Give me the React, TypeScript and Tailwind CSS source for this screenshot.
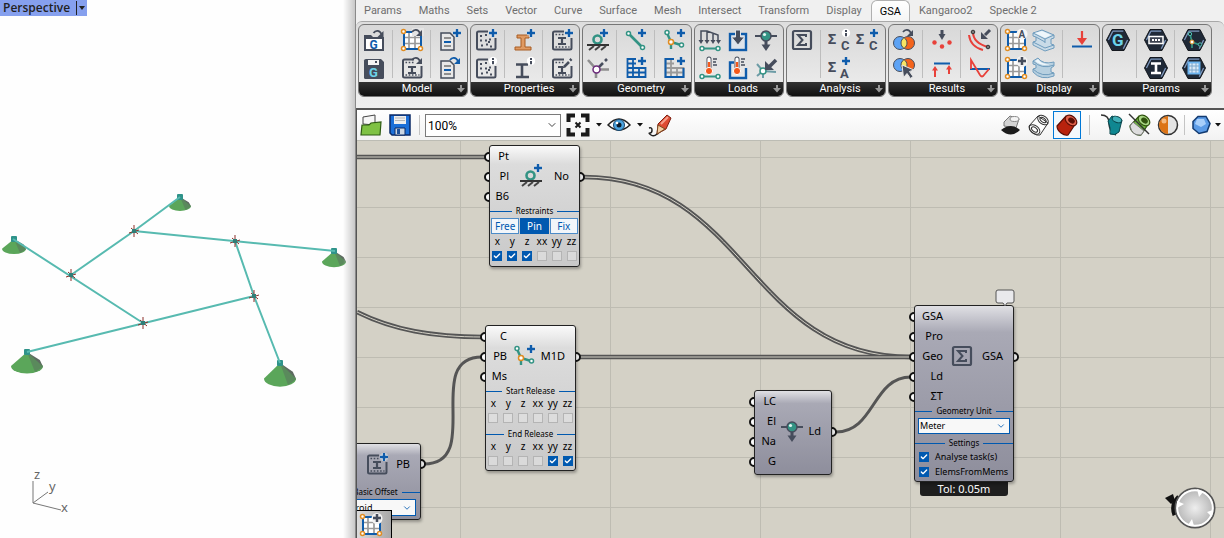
import { ReactNode } from 'react';
import { Check, ChevronDown } from 'lucide-react';

const DARK = '#464d5c';
const BLUE = '#0f5cab';
const TEAL = '#339384';
const ORANGE = '#e08d23';
const RED = '#e8413a';
const GRAY = '#8f8f8f';

/* ---------- icon parts ---------- */

function Icon({ children }: { children: ReactNode }) {
  return (
    <svg viewBox="0 0 24 24" className="h-6 w-6" fill="none" aria-hidden="true">
      {children}
    </svg>
  );
}

function Plus({ x = 18, y = 5, color = BLUE }: { x?: number; y?: number; color?: string }) {
  return (
    <>
      <path d={`M${x - 4} ${y}h8M${x} ${y - 4}v8`} stroke="#e6e6e6" strokeWidth="4.5" />
      <path d={`M${x - 4} ${y}h8M${x} ${y - 4}v8`} stroke={color} strokeWidth="2.4" />
    </>
  );
}

function Info({ x = 18, y = 5 }: { x?: number; y?: number }) {
  return (
    <>
      <circle cx={x} cy={y} r="4.2" fill="#fff" />
      <path d={`M${x} ${y - 3}v2M${x} ${y}v3.2`} stroke={DARK} strokeWidth="2" />
    </>
  );
}

function Swoosh({ color = DARK, x = 12, y = 2 }: { color?: string; x?: number; y?: number }) {
  return (
    <g transform={`translate(${x} ${y})`}>
      <path d="M0 3C2 0 6 0 8 4" stroke={color} strokeWidth="1.8" />
      <path d="M10 1v6H4z" fill={color} />
    </g>
  );
}

function IBeam({ x, y, s, color = DARK }: { x: number; y: number; s: number; color?: string }) {
  return (
    <path
      d={`M${x - s} ${y - s + 1}h${2 * s}M${x} ${y - s}v${2 * s}M${x - s} ${y + s - 1}h${2 * s}`}
      stroke={color}
      strokeWidth="2.2"
    />
  );
}

function Ring({ x, y, color = ORANGE, r = 2 }: { x: number; y: number; color?: string; r?: number }) {
  return <circle cx={x} cy={y} r={r} fill="#fff" stroke={color} strokeWidth="1.5" />;
}

function Thermometer() {
  return (
    <>
      <path d="M11 3v12" stroke={DARK} strokeWidth="5" strokeLinecap="round" />
      <path d="M11 3v12" stroke="#fff" strokeWidth="3.200" strokeLinecap="round" />
      <path d="M11 6v9" stroke="#f4581b" strokeWidth="2.400" />
      <circle cx="11" cy="15" r="3.600" fill="#f4581b" stroke="#fff" />
      <path d="M15 3h4M15 6h3M15 9h4" stroke={DARK} strokeWidth="1.400" />
    </>
  );
}

function GridPlate() {
  return (
    <>
      <path d="M4 4h17v17H4z" fill="#fff" stroke={BLUE} strokeWidth="2" />
      <path d="M9 5v15M15 5v15M5 9.500h15M5 15.500h15" stroke="#9a9a9a" strokeWidth="1.7" />
      <Ring x={3.500} y={3.500} />
      <Ring x={3.500} y={20.500} />
      <Ring x={20.500} y={20.500} />
    </>
  );
}

function SectionFrame({ children }: { children?: ReactNode }) {
  return (
    <>
      <path d="M14 3.500H4.500Q3 3.500 3 5V20Q3 21.500 4.500 21.500H20Q21.500 21.500 21.500 20V10" stroke={DARK} strokeWidth="2" />
      {children}
    </>
  );
}

const Speckles = () => (
  <path d="M6 8h2m3-1h2M6 12.500h2m3 0h2m2-1h2M7 17.500h2m3-1h2m2 2h2M14 14h2" stroke={DARK} strokeWidth="1.8" />
);

const FrameDots = () => (
  <path d="M5.500 6.500h8M5.500 19h14" stroke={DARK} strokeWidth="1.400" strokeDasharray="1.600 1.600" />
);

function Sigma({ x, y, size }: { x: number; y: number; size: number }) {
  return (
    <text x={x} y={y} fontSize={size} fontWeight="700" fontFamily="Noto Sans, sans-serif" fill={DARK}>
      Σ
    </text>
  );
}

function Glyph({ x, y, size, fill = DARK, children }: { x: number; y: number; size: number; fill?: string; children: string }) {
  return (
    <text x={x} y={y} fontSize={size} fontWeight="700" fontFamily="Roboto, sans-serif" fill={fill}>
      {children}
    </text>
  );
}

function Hexagon({ children }: { children: ReactNode }) {
  return (
    <Icon>
      <path d="M6 1.500h12L23.500 12 18 22.500H6L.5 12z" fill="#1f2937" stroke="#15191f" />
      <path d="M6.700 3.200h10.600M2.400 12l4.300-8.500M21.600 12l-4.300 8.700" stroke="#7d97bd" strokeWidth="1.3" />
      {children}
    </Icon>
  );
}

function Venn() {
  return (
    <>
      <circle cx="8" cy="14" r="6.500" fill="#5da3f5" stroke={DARK} />
      <circle cx="16" cy="14" r="6.500" fill="#f4641c" stroke={DARK} />
      <path d="M12 8.500c4 3 4 8 0 11-4-3-4-8 0-11z" fill="#f7e463" stroke={DARK} />
    </>
  );
}

const MemberFork = ({ stroke = TEAL }: { stroke?: string }) => (
  <>
    <path d="M5 5l4 9 10 3M9 14v7" stroke={stroke} strokeWidth="2.4" />
    <Ring x={5} y={4.500} color={stroke} />
    <Ring x={19.500} y={17} color={stroke} />
    <Ring x={9} y={14} r={2.500} />
  </>
);

const SupportShape = () => (
  <>
    <circle cx="11.500" cy="11.500" r="4" stroke={TEAL} strokeWidth="2.600" />
    <path d="M1 17h22" stroke="#333" strokeWidth="2" />
    <path d="M8 18l-5 4M14 18l-5 4M20 18l-5 4" stroke="#444" strokeWidth="2" />
  </>
);

const LoadShape = () => (
  <>
    <path d="M1 8h22" stroke={DARK} strokeWidth="2" />
    <path d="M12 12v6" stroke={DARK} strokeWidth="3" />
    <path d="M7.500 16.500h9L12 23z" fill={DARK} />
    <circle cx="12" cy="8" r="5" fill={TEAL} stroke={DARK} strokeWidth="1.500" />
    <circle cx="10.500" cy="6.500" r="1.600" fill="#dff5f0" />
  </>
);

const MeshShape = ({ color }: { color: string }) => (
  <path d="M12 3H3.500v18h18v-9H3.500M3.500 7.500H12M9 3v18M15 12v9M3.500 16.500h18" stroke={color} strokeWidth="1.800" />
);

const ElementLine = () => (
  <>
    <path d="M4 20.500h16" stroke={TEAL} strokeWidth="2" />
    <Ring x={4} y={20.500} color={TEAL} />
    <Ring x={20} y={20.500} color={TEAL} />
  </>
);

const SigmaBox = () => (
  <>
    <rect x="3" y="3" width="18" height="18" rx="1.500" stroke={DARK} strokeWidth="2.200" />
    <path d="M16 9V7H8l4.500 5L8 17h8v-2" stroke={DARK} strokeWidth="2" />
  </>
);

const BeamPlus = () => (
  <Icon>
    <SectionFrame>
      <FrameDots />
      <IBeam x={12} y={13} s={4} />
    </SectionFrame>
    <Plus x={19} />
  </Icon>
);

const GridPlus = () => (
  <Icon>
    <GridPlate />
    <circle cx="18" cy="5.500" r="5.500" fill="#f5f5f5" />
    <Plus x={18} y={5} color={DARK} />
  </Icon>
);

/* ---------- ribbon ---------- */

interface Tool {
  label: string;
  icon: ReactNode;
}

interface Group {
  name: string;
  // sections are split by a thin vertical rule, each one holds columns of tools
  sections: Tool[][][];
}

const sheet = (
  <>
    <path d="M3 5h9l4 4v13H3z" fill="#e8e8e8" stroke={DARK} strokeWidth="1.500" />
    <path d="M6 10h7" stroke={GRAY} strokeWidth="1.800" />
    <path d="M6 14h7" stroke={BLUE} strokeWidth="1.800" />
    <path d="M6 18h7" stroke={GRAY} strokeWidth="1.800" />
  </>
);

const groups: Group[] = [
  {
    name: 'Model',
    sections: [
      [[
        {
          label: 'Open model',
          icon: (
            <Icon>
              <path d="M2 23V7h7l2 2h11v14H2z" fill={DARK} />
              <path d="M4 11h16v10H4z" fill="#fff" />
              <Glyph x={7.500} y={20.500} size={12} fill={BLUE}>G</Glyph>
              <Swoosh x={11.500} />
            </Icon>
          ),
        },
        {
          label: 'Save model',
          icon: (
            <Icon>
              <path d="M4 3h15l3 3v15.500Q22 23 20.500 23h-17Q2 23 2 21.500v-17Q2 3 4 3z" fill={DARK} />
              <path d="M6 4h11v5H6z" fill="#f4f4f4" />
              <path d="M13 5h2v2h-2z" fill={DARK} />
              <Glyph x={7} y={21} size={13} fill="#6cd3ea">G</Glyph>
            </Icon>
          ),
        },
      ]],
      [[
        { label: 'Create geometry', icon: <Icon><GridPlate /><path d="M12 0h12v8H12z" fill="#e4e4e4" /><Swoosh x={12} y={1} /></Icon> },
        {
          label: 'Get properties',
          icon: <Icon><SectionFrame><FrameDots /><IBeam x={12} y={14} s={4} /></SectionFrame><Swoosh x={12} y={1} /></Icon>,
        },
      ]],
      [[
        { label: 'New list', icon: <Icon>{sheet}<Plus x={19} y={5} /></Icon> },
        { label: 'Get list', icon: <Icon>{sheet}<Swoosh color={BLUE} x={12} y={1} /></Icon> },
      ]],
    ],
  },
  {
    name: 'Properties',
    sections: [
      [[
        { label: 'Create material', icon: <Icon><SectionFrame><Speckles /></SectionFrame><Plus x={19} /></Icon> },
        { label: 'Material info', icon: <Icon><SectionFrame><Speckles /></SectionFrame><Info x={19} /></Icon> },
      ]],
      [[
        {
          label: 'Create section',
          icon: (
            <Icon>
              <path d="M5 7h12v3h-4v9h6v3H3v-3h6v-9H5z" fill="#e09a62" stroke="#a85c22" />
              <Plus x={19} />
            </Icon>
          ),
        },
        { label: 'Section info', icon: <Icon><path d="M4 8.500h12M10 8v13M4 21h13" stroke={DARK} strokeWidth="2.600" /><Info x={19} /></Icon> },
      ]],
      [[
        { label: 'Create property', icon: <BeamPlus /> },
        {
          label: 'Edit property',
          icon: (
            <Icon>
              <SectionFrame><FrameDots /><IBeam x={12} y={14} s={4} /></SectionFrame>
              <path d="M14 11l7-7" stroke="#e6e6e6" strokeWidth="5" />
              <path d="M14 11l5-5M20 4.500l1.500-1.500" stroke={DARK} strokeWidth="2.600" />
            </Icon>
          ),
        },
      ]],
    ],
  },
  {
    name: 'Geometry',
    sections: [
      [[
        { label: 'Create support', icon: <Icon><SupportShape /><Plus /></Icon> },
        {
          label: 'Edit node',
          icon: (
            <Icon>
              <path d="M2 4l8 9v9M11 13.500h12" stroke={GRAY} strokeWidth="2.600" />
              <path d="M13 11l4-4M19 5l2-2" stroke={DARK} strokeWidth="2.600" />
              <Ring x={10.500} y={13.500} color="#6b2a7a" r={3.500} />
            </Icon>
          ),
        },
      ]],
      [[
        {
          label: 'Create 1D element',
          icon: (
            <Icon>
              <path d="M5 6l13 13" stroke={TEAL} strokeWidth="2.600" />
              <Ring x={4.500} y={5.500} color={TEAL} />
              <Ring x={18.500} y={19.500} color={TEAL} />
              <Plus />
            </Icon>
          ),
        },
        { label: 'Create 2D element', icon: <Icon><MeshShape color={BLUE} /><Plus x={18} /></Icon> },
      ]],
      [[
        { label: 'Create 1D member', icon: <Icon><MemberFork /><Plus x={19} /></Icon> },
        {
          label: 'Create 2D member',
          icon: (
            <Icon>
              <MeshShape color="#9a9a9a" />
              <path d="M12 3H3.500v18h18v-9" stroke={BLUE} strokeWidth="2" />
              <Plus x={19} />
            </Icon>
          ),
        },
      ]],
    ],
  },
  {
    name: 'Loads',
    sections: [
      [
        [
          {
            label: 'Beam load',
            icon: (
              <Icon>
                <path d="M3 13V3h6l11 4v6M9 3v10M15 5v8" stroke={DARK} strokeWidth="1.500" />
                <path d="M.5 12h5L3 16zM6.500 12h5L9 16zM12.500 12h5L15 16zM18 12h5l-2.500 4z" fill={DARK} />
                <ElementLine />
              </Icon>
            ),
          },
          { label: 'Thermal beam load', icon: <Icon><Thermometer /><ElementLine /></Icon> },
        ],
        [
          {
            label: 'Face load',
            icon: (
              <Icon>
                <rect x="4" y="6" width="16" height="16" fill="#dde3ea" stroke={BLUE} strokeWidth="2.400" />
                <path d="M9.500 2h5v7h4L12 17l-6.500-8h4z" fill={DARK} stroke="#dde3ea" />
              </Icon>
            ),
          },
          {
            label: 'Thermal face load',
            icon: (
              <Icon>
                <path d="M8 6.500H4v15.500h16V12" stroke={BLUE} strokeWidth="2.400" />
                <Thermometer />
              </Icon>
            ),
          },
        ],
        [
          { label: 'Node load', icon: <Icon><LoadShape /></Icon> },
          {
            label: 'Grid load',
            icon: (
              <Icon>
                <path d="M3 8l6 7v7M3 20l6-5 13 1" stroke="#6d9ca6" strokeWidth="2" />
                <Ring x={9} y={15} color={TEAL} r={3} />
                <path d="M22 4l-7 7" stroke={DARK} strokeWidth="3.600" />
                <path d="M11 5v9h9z" fill={DARK} />
              </Icon>
            ),
          },
        ],
      ],
    ],
  },
  {
    name: 'Analysis',
    sections: [
      [[{ label: 'Analyse', icon: <Icon><SigmaBox /></Icon> }]],
      [
        [
          { label: 'Case info', icon: <Icon><Sigma x={0} y={16} size={14} /><Glyph x={13} y={22} size={13}>C</Glyph><Info x={18} y={5} /></Icon> },
          { label: 'Create task', icon: <Icon><Sigma x={0} y={16} size={14} /><Glyph x={12} y={22} size={13}>A</Glyph><Plus x={18} y={5} /></Icon> },
        ],
        [{ label: 'Create case', icon: <Icon><Sigma x={0} y={16} size={14} /><Glyph x={13} y={22} size={13}>C</Glyph><Plus x={18} y={5} /></Icon> }],
      ],
    ],
  },
  {
    name: 'Results',
    sections: [
      [[
        { label: 'Get result', icon: <Icon><g transform="translate(0 1)"><Venn /></g><Swoosh x={11} y={1} /></Icon> },
        {
          label: 'Select result',
          icon: (
            <Icon>
              <g transform="translate(0 -5)"><Venn /></g>
              <path d="M10 9l12 5-4.500 1.500 3.500 5-2.500 2-3.500-5-3.500 4z" fill={DARK} stroke="#e6e6e6" />
            </Icon>
          ),
        },
      ]],
      [[
        {
          label: 'Node displacements',
          icon: (
            <Icon>
              <path d="M12 2v5" stroke={DARK} strokeWidth="3" />
              <path d="M8.500 6h7L12 12z" fill={DARK} />
              <circle cx="4.500" cy="14.500" r="2.200" fill={RED} />
              <circle cx="12" cy="18.500" r="2.200" fill={RED} />
              <circle cx="19.500" cy="14.500" r="2.200" fill={RED} />
            </Icon>
          ),
        },
        {
          label: 'Reactions',
          icon: (
            <Icon>
              <path d="M4 7.500h16" stroke={BLUE} strokeWidth="2.200" />
              <path d="M5 21v-8M19 18v-6" stroke={RED} strokeWidth="2" />
              <path d="M2 14.500h6L5 10zM16 13.500h6L19 9z" fill={RED} />
            </Icon>
          ),
        },
      ]],
      [[
        {
          label: 'Beam displacements',
          icon: (
            <Icon>
              <path d="M5 4c0 7 4 12 15 15M1 7c1 8 6 13 14 15" stroke={RED} strokeWidth="2" />
              <circle cx="5" cy="4" r="1.800" fill="#777" stroke="#333" />
              <circle cx="20" cy="19" r="1.800" fill="#777" stroke="#333" />
              <path d="M22 2l-5 5" stroke={DARK} strokeWidth="3" />
              <path d="M13 4v7h7z" fill={DARK} />
            </Icon>
          ),
        },
        {
          label: 'Beam forces',
          icon: (
            <Icon>
              <path d="M2 13h20" stroke={BLUE} strokeWidth="2" />
              <path d="M3 13V4l9 15q2 3 4 0l5-6" stroke={RED} strokeWidth="1.800" />
            </Icon>
          ),
        },
      ]],
    ],
  },
  {
    name: 'Display',
    sections: [
      [
        [
          {
            label: 'Annotate',
            icon: <Icon><GridPlate /><circle cx="18" cy="6" r="5.500" fill="#f5f5f5" /><Glyph x={14.500} y={10} size={10}>A</Glyph></Icon>,
          },
          { label: 'Preview grid', icon: <GridPlus /> },
        ],
        [
          {
            label: 'Section preview',
            icon: (
              <Icon>
                <path d="M1 5l9-3 12 5v3l-3 1v5l3 1v3l-9 3-12-6v-3l3-1V9L1 8z" fill="#c9dbe8" stroke="#6f9cbd" />
                <path d="M1 5l12 6 9-4M13 11v4M1 14l12 6 9-3M4 9l9 5" stroke="#6f9cbd" />
                <path d="M3 5l7-2 9 4-6 3z" fill="#eef6fb" />
              </Icon>
            ),
          },
          {
            label: 'Deformed preview',
            icon: (
              <Icon>
                <path d="M1 5l5-3q5 7 16 4v4l-3 2v4l3 1v3q-13 5-21-4v-3l3-1V9L1 8z" fill="#b7d0e0" stroke="#6f9cbd" />
                <path d="M1 5q9 9 21 4M1 13q9 9 21 4" stroke="#6f9cbd" />
                <path d="M3 5l3-2q5 7 14 4-9 5-17-2z" fill="#eef6fb" />
              </Icon>
            ),
          },
        ],
      ],
      [[
        {
          label: 'Load diagram',
          icon: (
            <Icon>
              <path d="M12 3v8" stroke={RED} strokeWidth="2.200" />
              <path d="M7 10h10l-5 7z" fill={RED} />
              <path d="M2 18.500h20" stroke={BLUE} strokeWidth="2.200" />
            </Icon>
          ),
        },
      ]],
    ],
  },
  {
    name: 'Params',
    sections: [
      [[{ label: 'Model param', icon: <Hexagon><Glyph x={6} y={18} size={17} fill="#6cd3ea">G</Glyph></Hexagon> }]],
      [[
        {
          label: 'Material param',
          icon: (
            <Hexagon>
              <rect x="5" y="8.500" width="14" height="7" fill="#3b4250" stroke="#fff" strokeWidth="1.500" />
              <path d="M8 12h8" stroke="#fff" strokeWidth="2" strokeDasharray="2 1" />
            </Hexagon>
          ),
        },
        { label: 'Section param', icon: <Hexagon><path d="M7 7.500h10M12 7v10M7 17h10" stroke="#fff" strokeWidth="2.600" /></Hexagon> },
      ]],
      [[
        {
          label: 'Member param',
          icon: (
            <Hexagon>
              <path d="M8 6l2 8 8 3M10 14v6" stroke={TEAL} strokeWidth="1.700" />
              <circle cx="8" cy="6" r="1.700" fill="#1f2937" stroke="#4fc0b0" />
              <circle cx="18" cy="16.500" r="1.700" fill="#1f2937" stroke="#4fc0b0" />
              <circle cx="10" cy="14" r="2" fill="#fff" stroke={ORANGE} />
            </Hexagon>
          ),
        },
        {
          label: 'Mesh param',
          icon: (
            <Hexagon>
              <rect x="6.500" y="6.500" width="11" height="11" fill="#dbe9f7" stroke="#6cb4f0" strokeWidth="2" />
              <path d="M10 7v10M14 7v10M7 10h10M7 14h10" stroke="#7da7cc" />
            </Hexagon>
          ),
        },
      ]],
    ],
  },
];

const tabs = [
  'Params', 'Maths', 'Sets', 'Vector', 'Curve', 'Surface', 'Mesh', 'Intersect',
  'Transform', 'Display', 'GSA', 'Kangaroo2', 'Speckle 2',
];

function RibbonGroup({ group }: { group: Group }) {
  return (
    <section className="flex h-[73px] shrink-0 flex-col overflow-hidden rounded-md border border-[#777] bg-linear-to-b from-[#d8d8d8] to-[#eeeeee]">
      <div className="flex flex-1 pt-px pr-[3px] pl-px">
        {group.sections.map((section, i) => (
          <div key={i} className="flex">
            {i > 0 && <div className="my-1 mr-[5px] ml-1 w-px bg-[#bdbdbd]" />}
            {section.map((column, j) => (
              <div key={j} className="flex w-7 flex-col">
                {column.map((tool) => (
                  <button key={tool.label} aria-label={tool.label} className="flex h-7 w-7 items-center justify-center">
                    {tool.icon}
                  </button>
                ))}
              </div>
            ))}
          </div>
        ))}
      </div>
      <div className="relative bg-linear-to-b from-[#333] to-[#111] pl-2 text-center text-[11px] leading-[14px] text-white">
        {group.name}
        <svg viewBox="0 0 8 8" className="absolute top-[3px] right-[2px] h-2 w-2" aria-hidden="true">
          <path d="M3 0h2v3h3L4 7.500 0 3h3z" fill="#999" />
        </svg>
      </div>
    </section>
  );
}

function Ribbon() {
  return (
    <header className="flex flex-col bg-[#f0f0f0]">
      <nav className="flex h-[21px] gap-[17px] pl-2 text-[11px] leading-[22px] text-[#6e6e6e]">
        {tabs.map((tab) =>
          tab === 'GSA' ? (
            <button key={tab} className="-mx-2 -mb-px shrink-0 rounded-t-md border border-b-0 border-[#b0b0b0] bg-linear-to-b from-white to-[#f4f4f4] px-2 leading-[17px] text-black">
              {tab}
            </button>
          ) : (
            <button key={tab} className="shrink-0">{tab}</button>
          ),
        )}
      </nav>
      <div className="flex h-[87px] items-start gap-[2px] overflow-hidden rounded-t-md border-t border-[#a8a8a8] bg-linear-to-b from-[#dedede] to-[#f0f0f0] pt-[2px] pl-[2px]">
        {groups.map((group) => (
          <RibbonGroup key={group.name} group={group} />
        ))}
      </div>
    </header>
  );
}

/* ---------- canvas toolbar ---------- */

const Caret = () => (
  <svg viewBox="0 0 6 4" className="h-1 w-[6px]" aria-hidden="true">
    <path d="M0 0h6L3 3.500z" fill="#111" />
  </svg>
);

const Tube = ({ fill, light, line }: { fill: string; light: string; line: string }) => (
  <g stroke={line} strokeWidth="1.200">
    <path d="M2 13L11 3l10 7-8 12q-3 1-7-2t-4-7z" fill={fill} />
    <ellipse cx="16" cy="7.500" rx="6.500" ry="4.500" transform="rotate(38 16 7.500)" fill={light} />
    <ellipse cx="16.500" cy="7.500" rx="3" ry="2" transform="rotate(38 16.500 7.500)" fill={line} />
  </g>
);

function ToolButton({ label, active, children }: { label: string; active?: boolean; children: ReactNode }) {
  return (
    <button
      aria-label={label}
      className={
        active
          ? 'flex h-7 w-7 items-center justify-center border border-[#0078d7] bg-[#f3f8fc]'
          : 'flex h-7 w-7 items-center justify-center'
      }
    >
      {children}
    </button>
  );
}

function Toolbar() {
  return (
    <div className="flex h-[31px] items-center gap-px border-b border-[#bcbcb4] bg-linear-to-b from-white to-[#f2f2f2] pr-[3px]">
      <ToolButton label="Open file">
        <Icon>
          <path d="M4 11V4l12-2v10z" fill="#f7f7f7" stroke="#444" />
          <path d="M2 22l1-10h7l2-2 10-1-1 13z" fill="#7fc244" stroke="#2d5a12" strokeWidth="1.200" />
        </Icon>
      </ToolButton>
      <ToolButton label="Save file">
        <Icon>
          <path d="M2 2h20v20H4l-2-2z" fill="#1b6fd8" stroke="#0b2a66" strokeWidth="1.500" />
          <path d="M6 3h12v8H6z" fill="#eee" />
          <path d="M7 5h10M7 7.500h10" stroke="#b8b8b8" />
          <path d="M7 15h10v7H7z" fill="#ccd6e2" stroke="#0b2a66" />
          <path d="M9 16h3v5H9z" fill="#1b4f9a" />
        </Icon>
      </ToolButton>
      <div className="mx-1 h-5 w-px bg-[#c4c4c4]" />
      <div className="relative">
        <select aria-label="Zoom" className="h-[23px] w-[136px] appearance-none border border-[#7a7a7a] bg-white pl-[2px] text-xs text-black">
          <option>100%</option>
        </select>
        <ChevronDown className="pointer-events-none absolute top-[6px] right-[3px] h-3 w-3 text-[#444]" />
      </div>
      <div className="ml-[2px] flex items-center">
        <ToolButton label="Zoom extents">
          <Icon>
            <path d="M2.500 9V2.500H9M15 2.500h6.500V9M21.500 15v6.500H15M9 21.500H2.500V15" stroke="#1a1a1a" strokeWidth="4" />
            <path d="M9.500 9.500l5 5m0-5l-5 5" stroke="#1a1a1a" strokeWidth="2" />
          </Icon>
        </ToolButton>
        <button aria-label="Named views" className="flex w-[13px] justify-center"><Caret /></button>
        <ToolButton label="Preview">
          <Icon>
            <path d="M1 12Q12 0 23 12 12 22 1 12z" fill="#fff" stroke="#222" strokeWidth="1.500" />
            <circle cx="12" cy="12" r="5.500" fill="#4aa3df" stroke="#17466e" />
            <circle cx="12" cy="12" r="2.500" fill="#0b1c2c" />
            <circle cx="10" cy="10" r="1.300" fill="#fff" />
          </Icon>
        </ToolButton>
        <button aria-label="Preview options" className="flex w-[13px] justify-center"><Caret /></button>
        <ToolButton label="Sketch">
          <Icon>
            <path d="M1 15q3-1 3 2t-2 3 1 2 6-1q3-1 1-4" stroke="#222" strokeWidth="1.500" />
            <path d="M9 21l1-10L19 2l4 3-5 11z" fill="#de4b32" stroke="#7c1f10" />
            <path d="M9 21l1-9 7 4z" fill="#f4cfa5" stroke="#7a4a20" />
            <path d="M13 11l7-7" stroke="#f6a08c" strokeWidth="2" />
          </Icon>
        </ToolButton>
      </div>
      <div className="ml-auto flex items-center">
        <ToolButton label="No preview">
          <Icon>
            <path d="M5 9l6-6 9 3-3 9-12-2z" fill="#d4d4d4" stroke="#777" />
            <ellipse cx="15.500" cy="6" rx="4.500" ry="2.500" fill="#f4f4f4" stroke="#888" />
            <path d="M2 17q10-8 19 0-9 9-19 0z" fill="#1c1c1c" />
          </Icon>
        </ToolButton>
        <ToolButton label="Wireframe preview">
          <Icon>
            <path d="M2 13L11 3l10 7-8 12q-3 1-7-2t-4-7z" fill="#fff" stroke="#333" />
            <ellipse cx="16" cy="7" rx="6" ry="4" transform="rotate(38 16 7)" stroke="#333" />
            <ellipse cx="16" cy="7" rx="3.500" ry="2" transform="rotate(38 16 7)" stroke="#333" />
            <ellipse cx="7.500" cy="16.500" rx="6" ry="4" transform="rotate(38 7.500 16.500)" stroke="#333" />
            <ellipse cx="7.500" cy="16.500" rx="3.500" ry="2" transform="rotate(38 7.500 16.500)" stroke="#333" />
          </Icon>
        </ToolButton>
        <ToolButton label="Shaded preview" active>
          <Icon><Tube fill="#b8220d" light="#e0604a" line="#5a0d04" /></Icon>
        </ToolButton>
        <div className="mx-2 h-5 w-px bg-[#c4c4c4]" />
        <ToolButton label="Document preview">
          <Icon>
            <path d="M1 2q8 0 8 8t7 12" stroke="#333" strokeWidth="1.500" />
            <path d="M8 8l4-5 10 4-3 12q-4 4-9 2 1-6-2-13z" fill="#0f8791" stroke="#0a464c" />
            <ellipse cx="17" cy="6.500" rx="5" ry="3" transform="rotate(20 17 6.500)" fill="#41b0b8" stroke="#0a464c" />
          </Icon>
        </ToolButton>
        <ToolButton label="Selected preview">
          <Icon>
            <Tube fill="#6db83c" light="#a8d684" line="#30520f" />
            <path d="M2 13l3-4 11 9-3 4q-9 1-11-9z" fill="#ddd" stroke="#777" />
            <path d="M1 1l20 20" stroke="#333" strokeWidth="1.500" />
          </Icon>
        </ToolButton>
        <ToolButton label="Preview material">
          <Icon>
            <circle cx="12" cy="12" r="9.500" fill="#e4e4e4" stroke="#333" strokeWidth="1.500" />
            <path d="M12 3a9 9 0 000 18z" fill="#dc7416" />
            <circle cx="8" cy="8" r="2.500" fill="#f5ba80" />
          </Icon>
        </ToolButton>
        <div className="mx-[2px] h-5 w-px bg-[#c4c4c4]" />
        <ToolButton label="Mesh quality">
          <Icon>
            <path d="M9 3.500l8 0 4 7-3 8-8 2-6-5 0-7z" fill="#5b9be6" stroke="#123a70" strokeWidth="1.500" />
            <path d="M8 6l7 0 2 5-5 3-6-3z" fill="#a8cffa" />
          </Icon>
        </ToolButton>
        <button aria-label="Mesh quality options" className="flex w-[6px] justify-center"><Caret /></button>
      </div>
    </div>
  );
}

/* ---------- canvas nodes ---------- */

const axes = ['x', 'y', 'z', 'xx', 'yy', 'zz'];

function Tick({ label, checked }: { label: string; checked?: boolean }) {
  return (
    <span className="relative flex h-[10px] w-[10px] shrink-0">
      <input
        type="checkbox"
        aria-label={label}
        defaultChecked={checked}
        className="peer h-[10px] w-[10px] appearance-none border border-[#b4b4b4] bg-[#e4e4e4]/60 checked:border-[#0059b0] checked:bg-[#0059b0]"
      />
      <Check strokeWidth={4} className="pointer-events-none absolute top-px left-px hidden h-2 w-2 text-white peer-checked:block" />
    </span>
  );
}

function Divider({ children }: { children: string }) {
  return (
    <div className="flex items-center gap-1 text-[8px] leading-[10px] whitespace-nowrap">
      <span className="h-px flex-1 bg-[#0059b0]" />
      {children}
      <span className="h-px flex-1 bg-[#0059b0]" />
    </div>
  );
}

function AxisTicks({ name, on }: { name: string; on: string[] }) {
  return (
    <div className="grid grid-cols-6 justify-items-center pt-px text-[10px] leading-[12px]">
      {axes.map((axis) => (
        <div key={axis} className="flex flex-col items-center gap-1">
          <span>{axis}</span>
          <Tick label={`${name} ${axis}`} checked={on.includes(axis)} />
        </div>
      ))}
    </div>
  );
}

interface NodeProps {
  place: string;
  inputWidth: string;
  tone: 'light' | 'dark';
  inputs: string[];
  output: string;
  icon: ReactNode;
  children?: ReactNode;
}

function CanvasNode({ place, inputWidth, tone, inputs, output, icon, children }: NodeProps) {
  const tones = {
    light: 'from-[#fafafa] via-[#dcdcdc] to-[#c9c9c9]',
    dark: 'from-[#e0e0e4] via-[#a9a9b5] to-[#8e8e9c]',
  };

  return (
    <div className={`absolute rounded-[3px] border border-[#222] bg-linear-to-b via-15% text-[11px] leading-5 text-black shadow-[1px_2px_3px_rgba(0,0,0,0.3)] ${tones[tone]} ${place}`}>
      <div className="flex items-center">
        <div className={`text-right ${inputWidth}`}>
          {inputs.map((name, i) => (
            <div key={i} className="h-5">{name}</div>
          ))}
        </div>
        <div className="flex flex-1 justify-center">{icon}</div>
        <div className="pr-[10px]">{output}</div>
      </div>
      {children}
    </div>
  );
}

const ports: [number, number][] = [
  [132, 16], [132, 36], [132, 56], [223, 36],
  [128, 196], [128, 216], [128, 236], [219, 216],
  [64, 323],
  [397, 261], [397, 281], [397, 301], [397, 321], [475, 291],
  [557, 176], [557, 196], [557, 216], [557, 236], [557, 256], [657, 216],
];

const listWires = [
  'M0 16H129',
  'M0 171C36 189 76 196 126 196',
  'M226 36C390 36 390 216 554 216',
  'M222 216H554',
];

const itemWires = ['M67 323C127 323 65 216 125 216', 'M479 291C518 291 515 236 554 236'];

function Wires() {
  return (
    <svg className="absolute inset-0 h-full w-full" fill="none" aria-hidden="true">
      {listWires.map((d) => (
        <g key={d}>
          <path d={d} stroke="#555" strokeWidth="4.500" />
          <path d={d} stroke="#d4d1c6" strokeWidth="1" />
        </g>
      ))}
      {itemWires.map((d) => (
        <path key={d} d={d} stroke="#555" strokeWidth="3" />
      ))}
      {ports.map(([x, y]) => (
        <circle key={`${x}-${y}`} cx={x} cy={y} r="4" fill="#fff" stroke="#111" strokeWidth="2" />
      ))}
    </svg>
  );
}

function Compass() {
  return (
    <svg viewBox="0 0 52 44" className="absolute right-2 bottom-2 h-11 w-[52px]" aria-hidden="true">
      <defs>
        <radialGradient id="dial">
          <stop offset="0" stopColor="#eee" />
          <stop offset="1" stopColor="#b4b4b4" />
        </radialGradient>
      </defs>
      <path d="M15 11q-8 8-4 18" fill="none" stroke="#111" strokeWidth="5" />
      <path d="M1 12l8-4 2 7-4 3z" fill="#111" />
      <circle cx="31" cy="22" r="19.500" fill="url(#dial)" stroke="#555" strokeWidth="2" />
      <circle cx="31" cy="22" r="17.800" fill="none" stroke="#fff" strokeWidth="2" />
      <path d="M33 3l6 3-4 5zM13 15l7 3-7 4zM49 24l-6 2 5 5zM24 39l4-6 2 7z" fill="#fff" />
    </svg>
  );
}

function Canvas() {
  return (
    <main className="relative flex-1 overflow-hidden bg-[#d4d1c6] bg-[linear-gradient(to_right,#bebcb2_1px,transparent_1px),linear-gradient(to_bottom,#bebcb2_1px,transparent_1px)] bg-[size:150px_50px] bg-[position:103px_16px] font-['Noto_Sans',sans-serif]">
      <Wires />

      <CanvasNode place="left-[132px] top-1 w-[91px] h-[122px]" inputWidth="w-[19px]" tone="light" inputs={['Pt', 'Pl', 'B6']} output="No" icon={<Icon><SupportShape /><Plus x={19} y={4} /></Icon>}>
        <Divider>Restraints</Divider>
        <div className="mt-[2px] grid grid-cols-3 gap-px px-px text-center text-[10px] leading-[14px] text-[#0059b0]">
          <button className="border border-[#4d8cc8] bg-[#f2f6fa]">Free</button>
          <button className="border border-[#0059b0] bg-[#0059b0] text-white">Pin</button>
          <button className="border border-[#4d8cc8] bg-[#f2f6fa]">Fix</button>
        </div>
        <AxisTicks name="Restraint" on={['x', 'y', 'z']} />
      </CanvasNode>

      <CanvasNode place="left-[128px] top-[184px] w-[91px] h-[146px]" inputWidth="w-[21px]" tone="light" inputs={['C', 'PB', 'Ms']} output="M1D" icon={<Icon><MemberFork /><Plus x={19} y={5} /></Icon>}>
        <Divider>Start Release</Divider>
        <AxisTicks name="Start release" on={[]} />
        <div className="pt-[6px]">
          <Divider>End Release</Divider>
        </div>
        <AxisTicks name="End release" on={['yy', 'zz']} />
      </CanvasNode>

      <CanvasNode place="-left-[27px] top-[302px] w-[91px] h-[77px]" inputWidth="w-[27px]" tone="dark" inputs={['', '']} output="PB" icon={<BeamPlus />}>
        <div className="pt-[3px]">
          <Divider>Basic Offset</Divider>
        </div>
        <div className="relative mx-1 mt-[2px]">
          <select aria-label="Basic offset" className="block h-[17px] w-full appearance-none border border-[#0059b0] bg-[#f8f8f8] text-[9px] leading-[14px]">
            <option>Centroid</option>
          </select>
          <ChevronDown className="pointer-events-none absolute top-1 right-1 h-[10px] w-[10px] text-[#0059b0]" />
        </div>
      </CanvasNode>

      <CanvasNode place="left-[397px] top-[249px] w-[78px] h-[85px]" inputWidth="w-[21px]" tone="dark" inputs={['LC', 'El', 'Na', 'G']} output="Ld" icon={<Icon><LoadShape /></Icon>} />

      <div className="absolute top-[340px] left-[563px] w-[88px] rounded-b-[3px] bg-[#1e1e1e] text-center text-[11px] leading-[15px] text-white">
        Tol: 0.05m
      </div>
      <CanvasNode place="left-[557px] top-[164px] w-[100px] h-[177px]" inputWidth="w-[28px]" tone="dark" inputs={['GSA', 'Pro', 'Geo', 'Ld', 'ΣT']} output="GSA" icon={<Icon><SigmaBox /></Icon>}>
        <Divider>Geometry Unit</Divider>
        <div className="relative mx-[3px] mt-[2px]">
          <select aria-label="Geometry unit" className="block h-4 w-full appearance-none border border-[#0059b0] bg-[#f8f8f8] pl-px text-[9px] leading-[14px]">
            <option>Meter</option>
          </select>
          <ChevronDown className="pointer-events-none absolute top-[3px] right-1 h-[10px] w-[10px] text-[#0059b0]" />
        </div>
        <div className="pt-1">
          <Divider>Settings</Divider>
        </div>
        <div className="flex flex-col pt-px pl-1 text-[9px] leading-[15px]">
          <div className="flex items-center gap-[6px]"><Tick label="Analyse task(s)" checked />Analyse task(s)</div>
          <div className="flex items-center gap-[6px]"><Tick label="ElemsFromMems" checked />ElemsFromMems</div>
        </div>
      </CanvasNode>
      <svg viewBox="0 0 20 18" className="absolute top-[148px] left-[638px] h-[18px] w-5" aria-hidden="true">
        <path d="M3 1h14q2 0 2 2v9q0 2-2 2h-5l-2 3-2-3H3q-2 0-2-2V3q0-2 2-2z" fill="#e9e9ec" stroke="#555" />
      </svg>

      <button aria-label="Grid preview" className="absolute bottom-0 left-0 flex h-7 w-[35px] items-center border border-b-0 border-l-0 border-black bg-linear-to-r from-[#dcdcdc] to-[#a8a8a8] pl-[2px]">
        <GridPlus />
      </button>
      <Compass />
    </main>
  );
}

/* ---------- 3D viewport ---------- */

// apex x, apex y, half width, height
const cones: [number, number, number, number][] = [
  [180, 197, 11, 13],
  [14, 239, 12, 14],
  [334, 251, 12, 15],
  [27, 352, 16, 20],
  [280, 363, 16, 22],
];

const joints: [number, number][] = [[134, 231], [235, 241], [71, 275], [143, 323], [254, 296]];

function Viewport() {
  return (
    <aside className="relative w-[355px] shrink-0 bg-[#fefefe]">
      <button className="absolute top-0 left-0 flex h-4 items-center bg-[#86a0ee] pl-[3px] font-['Open_Sans',sans-serif] text-[12px] font-semibold text-[#222]">
        Perspective
        <span className="ml-[6px] flex h-[14px] items-center border-l border-[#222] px-[2px]">
          <svg viewBox="0 0 6 4" className="h-1 w-[6px]" aria-hidden="true"><path d="M0 0h6L3 4z" fill="#222" /></svg>
        </span>
      </button>
      <svg className="h-full w-full" fill="none" aria-label="Structure model">
        {cones.map(([x, y, w, h]) => (
          <g key={x}>
            <path d={`M${x} ${y}L${x - w} ${y + h * 0.7}A${w} ${h * 0.38} 0 0 0 ${x + w} ${y + h * 0.7}z`} fill="#5ba65a" />
            <path d={`M${x} ${y}L${x + w * 0.5} ${y + h}L${x + w} ${y + h * 0.75}L${x + w * 0.8} ${y + h * 0.5}z`} fill="#5a8a5c" />
            <path d={`M${x} ${y}L${x + w} ${y + h * 0.72}L${x + w * 0.8} ${y + h * 0.4}z`} fill="#5d6a60" />
            <rect x={x - 3} y={y - 3} width="6" height="6" rx="1" fill="#2f938a" />
          </g>
        ))}
        <path
          d="M180 197L134 231L71 275M134 231L335 251M235 241L254 296L280 363M254 296L27 352M13 239L143 323"
          stroke="#57bab0"
          strokeWidth="2"
        />
        {joints.map(([x, y]) => (
          <g key={x}>
            <path d={`M${x} ${y - 6}v12M${x - 5} ${y + 2}l10-3M${x - 3} ${y - 3}l7 6`} stroke="#8c2f28" />
            <rect x={x - 2} y={y - 2} width="4" height="4" fill="#2f7f78" />
          </g>
        ))}
      </svg>
      <svg viewBox="0 -10 50 64" className="absolute bottom-4 left-6 h-16 w-[50px]" fill="none" aria-hidden="true">
        <path d="M9 35V13M9 35l15-11M9 35l28 7" stroke="#777" />
        <g fill="#666" fontSize="13" fontFamily="Noto Sans, sans-serif">
          <text x="10" y="11">z</text>
          <text x="25" y="23">y</text>
          <text x="37" y="44">x</text>
        </g>
      </svg>
      <div className="absolute inset-y-0 right-0 w-3 bg-linear-to-r from-transparent to-[#c8c8c8]" />
    </aside>
  );
}

export default function App() {
  return (
    <div className="flex min-h-screen font-['Roboto',sans-serif]">
      <Viewport />
      <div className="flex min-w-0 flex-1 flex-col border-l border-[#8a8a8a]">
        <Ribbon />
        <div className="flex flex-1 flex-col border-t-2 border-l border-[#555]">
          <Toolbar />
          <Canvas />
        </div>
      </div>
    </div>
  );
}
